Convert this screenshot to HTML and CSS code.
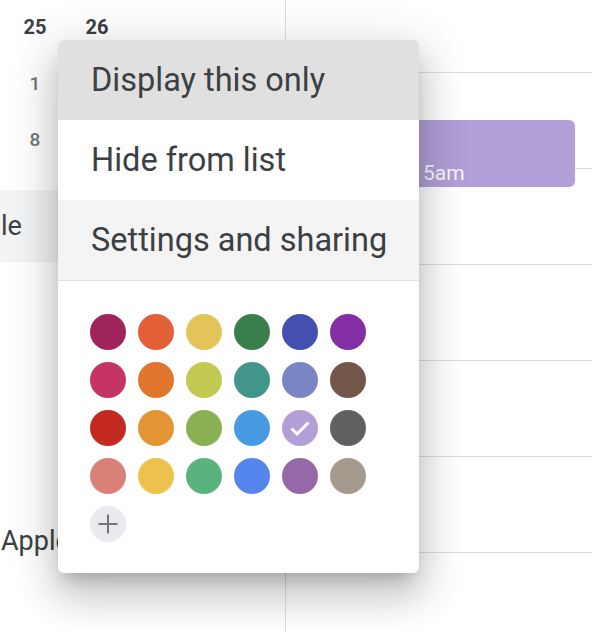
FILE: index.html
```html
<!DOCTYPE html>
<html lang="en">
<head>
<meta charset="utf-8">
<title>Calendar options</title>
<link rel="stylesheet" href="styles.css">
</head>
<body>
<div class="page">
  <aside class="sidebar">
    <div class="minical">
      <div class="mini-row head"><span class="cell">25</span><span class="cell">26</span></div>
      <div class="mini-row"><span class="cell">1</span></div>
      <div class="mini-row"><span class="cell">8</span></div>
    </div>
    <div class="cal-item active"><span class="cal-name">le</span></div>
    <div class="cal-item lower"><span class="cal-name">Apple</span></div>
  </aside>
  <div class="vline"></div>
  <main class="grid">
    <div class="grid-top"></div>
    <div class="grid-row"></div>
    <div class="grid-row"></div>
    <div class="grid-row"></div>
    <div class="grid-row"></div>
    <div class="grid-row"></div>
    <div class="grid-row"></div>
    <div class="event"><span class="event-time">5am</span></div>
  </main>

  <div class="menu">
    <div class="menu-item hover">Display this only</div>
    <div class="menu-item">Hide from list</div>
    <div class="menu-item focus">Settings and sharing</div>
    <div class="menu-sep"></div>
    <div class="swatches">
      <span class="sw" style="background:#a0245c"></span>
      <span class="sw" style="background:#e35f36"></span>
      <span class="sw" style="background:#e2c45a"></span>
      <span class="sw" style="background:#387f4b"></span>
      <span class="sw" style="background:#4350b0"></span>
      <span class="sw" style="background:#842ea4"></span>

      <span class="sw" style="background:#c53462"></span>
      <span class="sw" style="background:#e0752e"></span>
      <span class="sw" style="background:#c3c952"></span>
      <span class="sw" style="background:#42958a"></span>
      <span class="sw" style="background:#7a86c4"></span>
      <span class="sw" style="background:#73554a"></span>

      <span class="sw" style="background:#c3291e"></span>
      <span class="sw" style="background:#e39535"></span>
      <span class="sw" style="background:#8ab054"></span>
      <span class="sw" style="background:#469ae2"></span>
      <span class="sw" style="background:#b29fd8">
        <svg class="check" viewBox="0 0 36 36" width="36" height="36"><path d="M9.5 18.5 L15 24 L26.5 12.5" fill="none" stroke="#ffffff" stroke-width="3"/></svg>
      </span>
      <span class="sw" style="background:#616161"></span>

      <span class="sw" style="background:#d98177"></span>
      <span class="sw" style="background:#eec04d"></span>
      <span class="sw" style="background:#5ab27c"></span>
      <span class="sw" style="background:#5486ee"></span>
      <span class="sw" style="background:#9569a9"></span>
      <span class="sw" style="background:#a59a8e"></span>

      <span class="sw add">
        <svg viewBox="0 0 36 36" width="36" height="36"><path d="M18 8.5 V27.5 M8.5 18 H27.5" fill="none" stroke="#757575" stroke-width="2"/></svg>
      </span>
    </div>
  </div>
</div>
</body>
</html>
```
FILE: styles.css
```css
* { box-sizing: border-box; }
html, body { margin: 0; padding: 0; background: #ffffff; }
body {
  width: 592px;
  height: 632px;
  overflow: hidden;
  font-family: Roboto, "Noto Sans", "Liberation Sans", sans-serif;
  color: #3c4043;
}
.page {
  position: relative;
  width: 592px;
  height: 632px;
  display: grid;
  grid-template-columns: 285px 1px 1fr;
}
.sidebar {
  display: flex;
  flex-direction: column;
  overflow: hidden;
}
.minical { margin-top: -1px; }
.mini-row {
  display: flex;
  height: 56px;
  align-items: center;
  padding-left: 4px;
}
.cell {
  width: 62px;
  text-align: center;
  font-size: 19px;
  font-weight: 500;
  color: #70757a;
}
.head .cell { font-size: 20px; font-weight: 700; color: #3c4043; }
.cal-item {
  height: 72px;
  display: flex;
  align-items: center;
  width: 262px;
  border-radius: 0 36px 36px 0;
}
.cal-item.active { margin-top: 23px; background: #f1f3f4; }
.cal-item.lower { margin-top: 243px; }
.cal-name { font-size: 27px; padding-left: 1px; white-space: nowrap; }
.vline { background: #dadce0; }
.grid { position: relative; }
.grid-top { height: 72px; }
.grid-row { height: 96px; border-top: 1px solid #dadce0; }
.event {
  position: absolute;
  left: 14px;
  top: 120px;
  width: 275px;
  height: 67px;
  background: #b29fd8;
  border-radius: 6px;
  display: flex;
  align-items: flex-end;
  padding-bottom: 2px;
}
.event-time {
  padding-left: 123px;
  font-size: 21px;
  line-height: 24px;
  color: rgba(255, 255, 255, 0.92);
}
.menu {
  position: absolute;
  z-index: 5;
  left: 58px;
  top: 40px;
  width: 361px;
  height: 533px;
  background: #ffffff;
  border-radius: 6px;
  overflow: hidden;
  box-shadow: 0 24px 38px 3px rgba(0,0,0,0.14), 0 9px 46px 8px rgba(0,0,0,0.12), 0 11px 15px -7px rgba(0,0,0,0.2);
}
.menu-item {
  height: 80px;
  display: flex;
  align-items: center;
  padding-left: 33px;
  font-size: 32.5px;
  color: #3c4043;
  white-space: nowrap;
}
.menu-item.hover { background: #e0e0e0; }
.menu-item.focus { background: #f4f4f4; }
.menu-sep { height: 1px; background: #e0e0e0; }
.swatches {
  display: grid;
  grid-template-columns: repeat(6, 36px);
  grid-auto-rows: 36px;
  gap: 12px;
  padding: 33px 0 0 32px;
}
.sw {
  width: 36px;
  height: 36px;
  border-radius: 50%;
  display: block;
}
.sw svg { display: block; }
.sw.add { background: #e8eaed; }
```
